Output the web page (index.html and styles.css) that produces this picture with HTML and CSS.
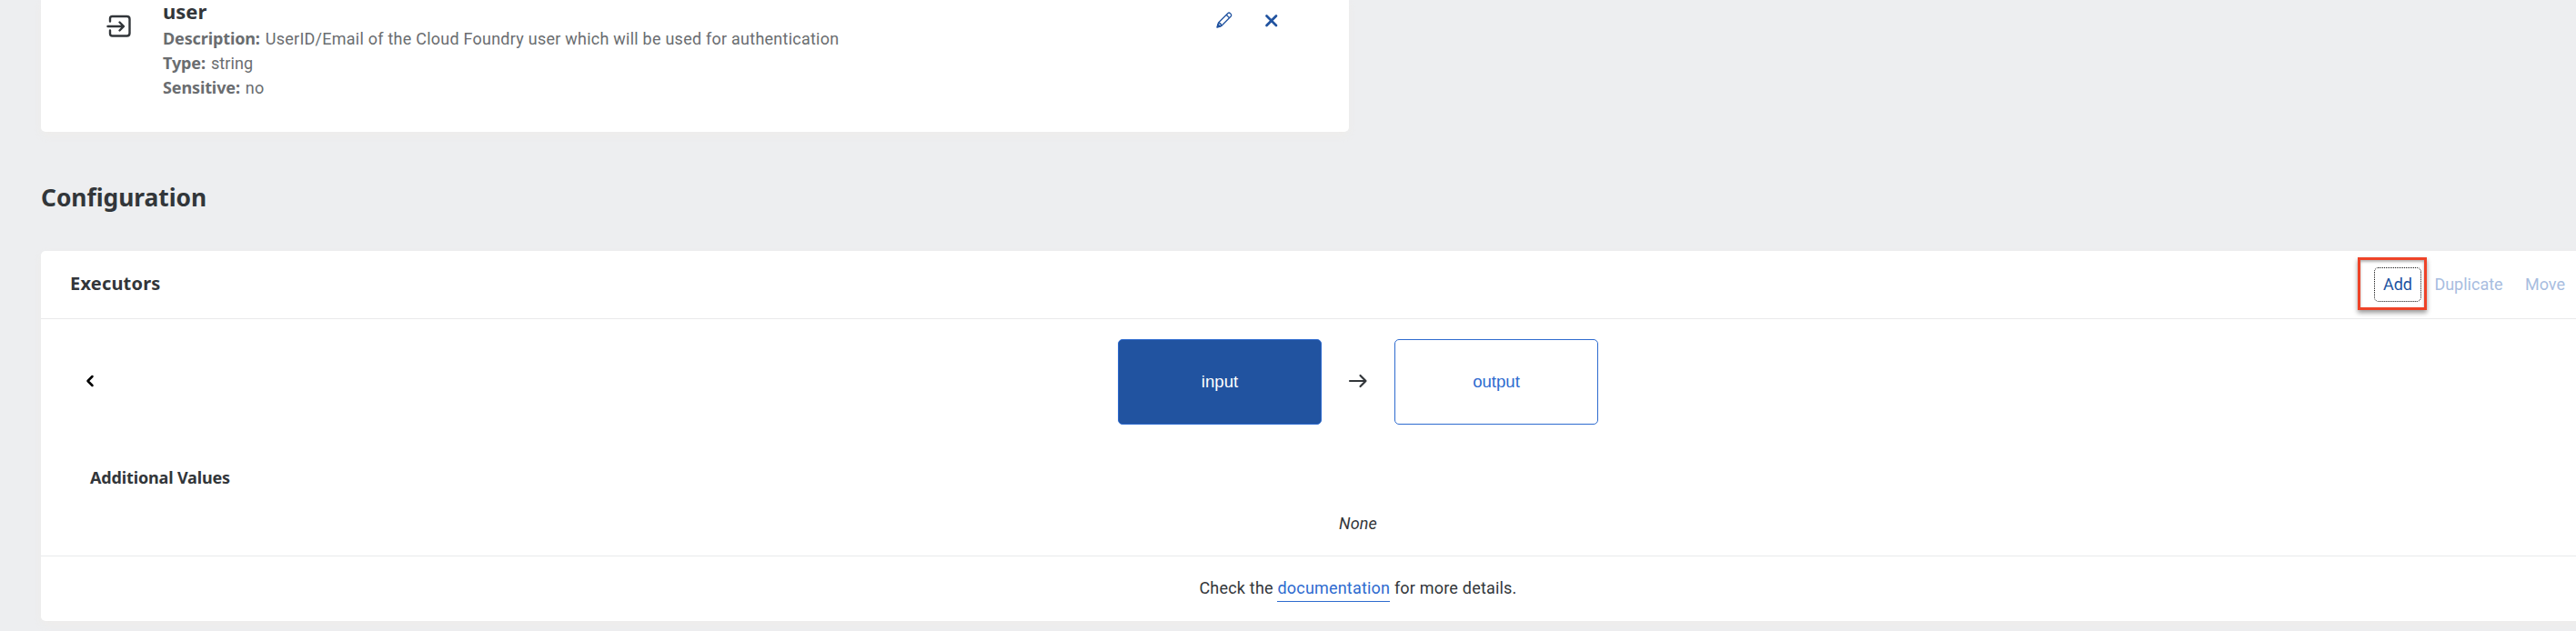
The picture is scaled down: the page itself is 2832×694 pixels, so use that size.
FILE: index.html
```html
<!DOCTYPE html>
<html lang="en">
<head>
<meta charset="utf-8">
<title>Configuration</title>
<link rel="stylesheet" href="styles.css">
</head>
<body>
<section class="card input-card">
  <svg class="input-icon" width="28" height="26" viewBox="0 0 28 26"><path d="M4 7.500V4.500Q4 2 6.500 2H22.500Q25.500 2 25.500 5V20.500Q25.500 23.500 22.500 23.500H6.500Q4 23.500 4 21V17.500M1.500 13H18.500M14.500 8.500L19 13L14.500 17.500"/></svg>
  <div class="details">
    <h3 class="name">user</h3>
    <p class="line"><b class="k-desc">Description:</b><span class="v-desc">UserID/Email of the Cloud Foundry user which will be used for authentication</span></p>
    <p class="line"><b>Type:</b><span class="value">string</span></p>
    <p class="line"><b>Sensitive:</b><span class="value">no</span></p>
  </div>
  <div class="actions">
    <svg width="20" height="20" viewBox="0 0 20 20" class="pencil"><path d="M2.500 17.500L3.500 13L14 2.500Q15.200 1.500 16.500 2.700L17.200 3.400Q18.300 4.700 17.200 6L6.800 16.500ZM12.300 4.300L15.400 7.600M3.500 13Q6.500 13.500 6.800 16.500"/><path class="tip" d="M2 18L2.900 14.600L5.500 17.100Z"/></svg>
    <svg width="16" height="16" viewBox="0 0 16 16" class="cross"><path d="M2.500 2.500L13 13M13 2.500L2.500 13"/></svg>
  </div>
</section>

<h2 class="section-title">Configuration</h2>

<section class="card executors">
  <header class="bar">
    <h3 class="bar-title">Executors</h3>
    <div class="buttons">
      <button class="btn add">Add<span class="highlight"></span></button>
      <button class="btn disabled duplicate">Duplicate</button>
      <button class="btn disabled move">Move</button>
    </div>
  </header>
  <div class="flow">
    <svg class="chevron" width="10" height="14" viewBox="0 0 10 14"><path d="M7.500 2L2.500 7L7.500 12"/></svg>
    <div class="node active">input</div>
    <svg class="arrow" width="22" height="16" viewBox="0 0 22 16"><path d="M2 8H19.500M13.500 2L19.500 8L13.500 14"/></svg>
    <div class="node">output</div>
  </div>
  <div class="values">
    <h4 class="values-title">Additional Values</h4>
    <p class="none">None</p>
  </div>
  <footer class="foot"><p>Check the <a class="link" href="#">documentation</a> for more details.</p></footer>
</section>
</body>
</html>
```
FILE: styles.css
```css
* { box-sizing: border-box; }
html { overflow: hidden; }
body {
  margin: 0;
  height: 694px;
  padding-left: 45px;
  overflow: hidden;
  background: #edeef0;
  color: #32363a;
  font: 18px Roboto, sans-serif;
}
h2, h3, h4, p { margin: 0; }
h2, h3, h4, b { font-family: "Noto Sans", sans-serif; font-weight: 700; }
svg { display: block; flex: none; fill: none; stroke-linecap: round; stroke-linejoin: round; }
.card { background: #fff; border-radius: 5px; box-shadow: 0 4px 8px rgba(240, 236, 228, .4); }

.input-card {
  display: flex;
  width: 1438px;
  height: 145px;
  padding: 0 77px 0 72px;
  border-radius: 0 0 5px 5px;
}
.input-icon { margin-top: 16px; stroke: #32363a; stroke-width: 2.4; }
.details { flex: 1; margin-left: 34px; }
.name { height: 29px; font-size: 22px; line-height: 25px; }
.line { display: flex; align-items: baseline; gap: 6px; height: 27px; line-height: 27px; color: #6a6d70; }
.line b { letter-spacing: -.12px; }
.value { letter-spacing: .1px; }
.v-desc { letter-spacing: .24px; }
.actions { display: flex; gap: 34px; color: #2153a0; }
.pencil { margin-top: 12px; stroke: #2153a0; stroke-width: 1.3; }
.tip { fill: #2153a0; }
.cross { margin-top: 15px; stroke: #2153a0; stroke-width: 2.7; }

.section-title { height: 131px; padding-top: 52px; font-size: 26.4px; letter-spacing: -.04px; line-height: 40px; }

.executors { width: 2896px; height: 407px; }
.bar {
  display: flex;
  justify-content: space-between;
  align-items: center;
  height: 75px;
  padding: 0 121px 0 32px;
  border-bottom: 1px solid #e9eaeb;
}
.bar-title { padding-bottom: 4px; font-size: 20px; letter-spacing: .2px; }
.buttons { display: flex; align-items: center; gap: 14px; }
.btn {
  position: relative;
  height: 38px;
  padding: 0;
  border: 0;
  background: none;
  color: #2153a0;
  font: 18px/38px Roboto, sans-serif;
}
.add { width: 52px; border: 1px dotted #111; border-radius: 5px; line-height: 36px; }
.duplicate { width: 76px; }
.move { width: 44px; margin-left: 10px; }
.disabled { color: #a8bddf; }
.highlight {
  position: absolute;
  inset: -12px -7px -10px -19px;
  border: 3px solid #ee4328;
  box-shadow: 0 3px 5px rgba(0, 0, 0, .4), inset 0 2px 3px rgba(0, 0, 0, .3);
}

.flow { display: grid; grid-template-columns: 1fr 224px 80px 224px 1fr; align-items: center; height: 138px; }
.chevron { margin-left: 49px; margin-top: -3px; stroke: #000; stroke-width: 2.5; }
.node {
  height: 94px;
  border: 1px solid #2e6bcf;
  border-radius: 5px;
  color: #2e6bcf;
  font: 18.6px/92px "Liberation Sans", Arial, sans-serif;
  text-align: center;
}
.active { background: #2153a0; color: #fff; }
.arrow { justify-self: center; margin-top: -3px; stroke: #32363a; stroke-width: 2.2; }

.values { height: 123px; padding-top: 23px; border-bottom: 1px solid #e9eaeb; }
.values-title { padding-left: 54px; height: 50px; line-height: 27px; letter-spacing: -.15px; font-size: 18px; }
.none { line-height: 27px; text-align: center; font-style: italic; letter-spacing: .15px; }
.foot { display: flex; align-items: center; justify-content: center; height: 69px; letter-spacing: .2px; }
.link { padding-bottom: 4px; border-bottom: 1px solid #2e6bcf; color: #2e6bcf; text-decoration: none; }
```
